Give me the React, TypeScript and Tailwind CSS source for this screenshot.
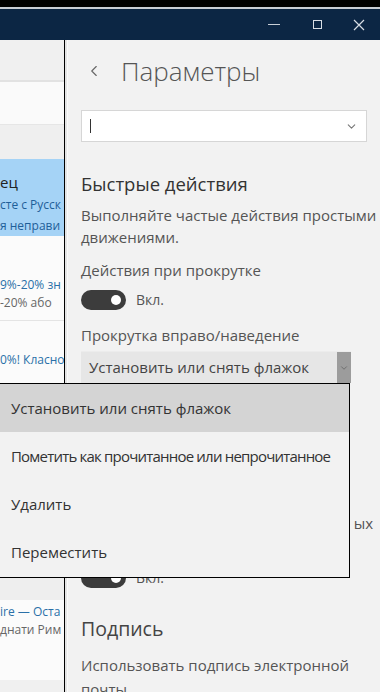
import { ChevronDown, ChevronLeft } from 'lucide-react';

/**
 * Mail settings pane with "Быстрые действия" and an open swipe-action dropdown.
 */
const font = { fontFamily: '"Open Sans", "Noto Sans", sans-serif' };

function Toggle() {
  return (
    <div className="w-[45px] h-[20px] rounded-full bg-[#3c3c3c] flex items-center justify-end pr-[5px]">
      <div className="w-[10px] h-[10px] rounded-full bg-white" />
    </div>
  );
}

export default function App() {
  return (
    <div className="relative w-[380px] h-[692px] overflow-hidden bg-[#f2f2f2]" style={font}>
      {/* Window chrome */}
      <div className="h-[7px] bg-black" />
      <div className="h-[2px] bg-[#c9ced6]" />
      <div className="h-[31px] bg-[#0c2644] flex items-center justify-end text-[#d8dde4]">
        <div className="w-[44px] flex justify-center">
          <div className="w-[12px] h-[1px] bg-[#c8ced6]" />
        </div>
        <div className="w-[42px] flex justify-center">
          <div className="w-[9px] h-[9px] border border-[#d8dde4]" />
        </div>
        <div className="w-[42px] flex justify-center">
          <svg width="12" height="12" viewBox="0 0 12 12" stroke="currentColor" strokeWidth="1.2">
            <path d="M1 1l10 10M11 1L1 11" />
          </svg>
        </div>
      </div>

      <div className="flex h-[652px]">
        {/* Message list (mostly hidden) */}
        <div className="w-[64px] shrink-0 overflow-hidden text-[12px] whitespace-nowrap">
          <div className="h-[40px] bg-[#f0f0f0]" />
          <div className="h-[2px] bg-[#e2e2e2]" />
          <div className="h-[43px] bg-[#fafafa] border-b border-[#e6e6e6]" />
          <div className="h-[34px] bg-[#efefef]" />
          <div className="h-[77px] bg-[#a5d3f6] flex flex-col pt-[12px]">
            <span className="text-[15px] text-[#222] leading-[22px]">ец</span>
            <span className="text-[#1f5f99] leading-[24px]">сте с Русск</span>
            <span className="text-[#1f5f99] leading-[18px]">я неправи</span>
          </div>
          <div className="h-[85px] bg-[#fbfbfb] border-b border-[#e4e4e4] flex flex-col pt-[40px]">
            <span className="text-[#2a70a8] leading-[18px]">9%-20% зн</span>
            <span className="text-[#666] leading-[18px]">-20% або</span>
          </div>
          <div className="h-[255px] bg-[#fbfbfb] flex flex-col pt-[30px]">
            <span className="text-[#2a70a8] leading-[18px]">0%! Класно</span>
          </div>
          <div className="h-[24px] bg-[#eeeeee]" />
          <div className="h-[80px] bg-[#fbfbfb] flex flex-col pt-[3px]">
            <span className="text-[#2a70a8] leading-[18px]">ire — Оста</span>
            <span className="text-[#666] leading-[18px]">днати Рим</span>
          </div>
          <div className="h-[20px] bg-[#f0f0f0]" />
        </div>
        <div className="w-[1px] shrink-0 bg-black" />
        <div className="w-[3px] shrink-0 bg-[#e4e4e4] border-r border-[#fafafa]" />

        {/* Settings pane */}
        <div className="flex-1 min-w-0 pl-[13px] pr-[13px] text-[#555] text-[15px] whitespace-nowrap">
          <div className="h-[64px] flex items-center gap-[18px] pl-[4px] pb-[2px]">
            <ChevronLeft size={18} strokeWidth={1.5} className="text-[#666]" />
            <span className="text-[26px] font-light text-[#555] leading-none">Параметры</span>
          </div>
          <div className="mt-[6px] h-[32px] bg-white border border-[#d6d6d6] flex items-center justify-between px-[8px]">
            <span className="w-[1px] h-[14px] bg-[#333]" />
            <ChevronDown size={13} strokeWidth={2} className="text-[#777]" />
          </div>

          <div className="mt-[29px] text-[18.5px] text-[#333] leading-[26px]">Быстрые действия</div>
          <div className="mt-[7px] leading-[22px]">
            Выполняйте частые действия простыми
            <br />
            движениями.
          </div>
          <div className="mt-[11px] leading-[22px]">Действия при прокрутке</div>
          <div className="mt-[8px] flex items-center gap-[10px]">
            <Toggle />
            <span className="text-[14px]">Вкл.</span>
          </div>
          <div className="mt-[14px] leading-[22px]">Прокрутка вправо/наведение</div>
          <div className="mt-[5px] h-[32px] w-[270px] bg-[#e6e6e6] border-t border-[#ececec] flex items-center justify-between pl-[8px]">
            <span className="text-[#444]">Установить или снять флажок</span>
            <div className="h-full w-[14px] bg-[#9c9c9c] flex items-center justify-center">
              <ChevronDown size={10} strokeWidth={2} className="text-[#666]" />
            </div>
          </div>

          <div className="mt-[129px] leading-[22px] text-right -mr-[6px]">ых</div>
          <div className="mt-[33px] flex items-center gap-[10px]">
            <Toggle />
            <span className="text-[14px]">Вкл.</span>
          </div>
          <div className="mt-[26px] text-[19.5px] text-[#444] leading-[30px]">Подпись</div>
          <div className="mt-[9px] leading-[24px]">
            Использовать подпись электронной
            <br />
            почты
          </div>
        </div>
      </div>

      {/* Open dropdown list */}
      <div className="absolute left-0 top-[383px] w-[350px] h-[195px] bg-[#f2f2f2] border-r border-b border-t border-black flex flex-col text-[15px] text-[#333] whitespace-nowrap">
        <div className="h-[48px] bg-[#d4d4d4] flex items-center pl-[11px]">Установить или снять флажок</div>
        <div className="h-[48px] flex items-center pl-[11px] tracking-[-0.8px]">
          Пометить как прочитанное или непрочитанное
        </div>
        <div className="h-[48px] flex items-center pl-[11px]">Удалить</div>
        <div className="h-[48px] flex items-center pl-[11px]">Переместить</div>
      </div>
    </div>
  );
}
